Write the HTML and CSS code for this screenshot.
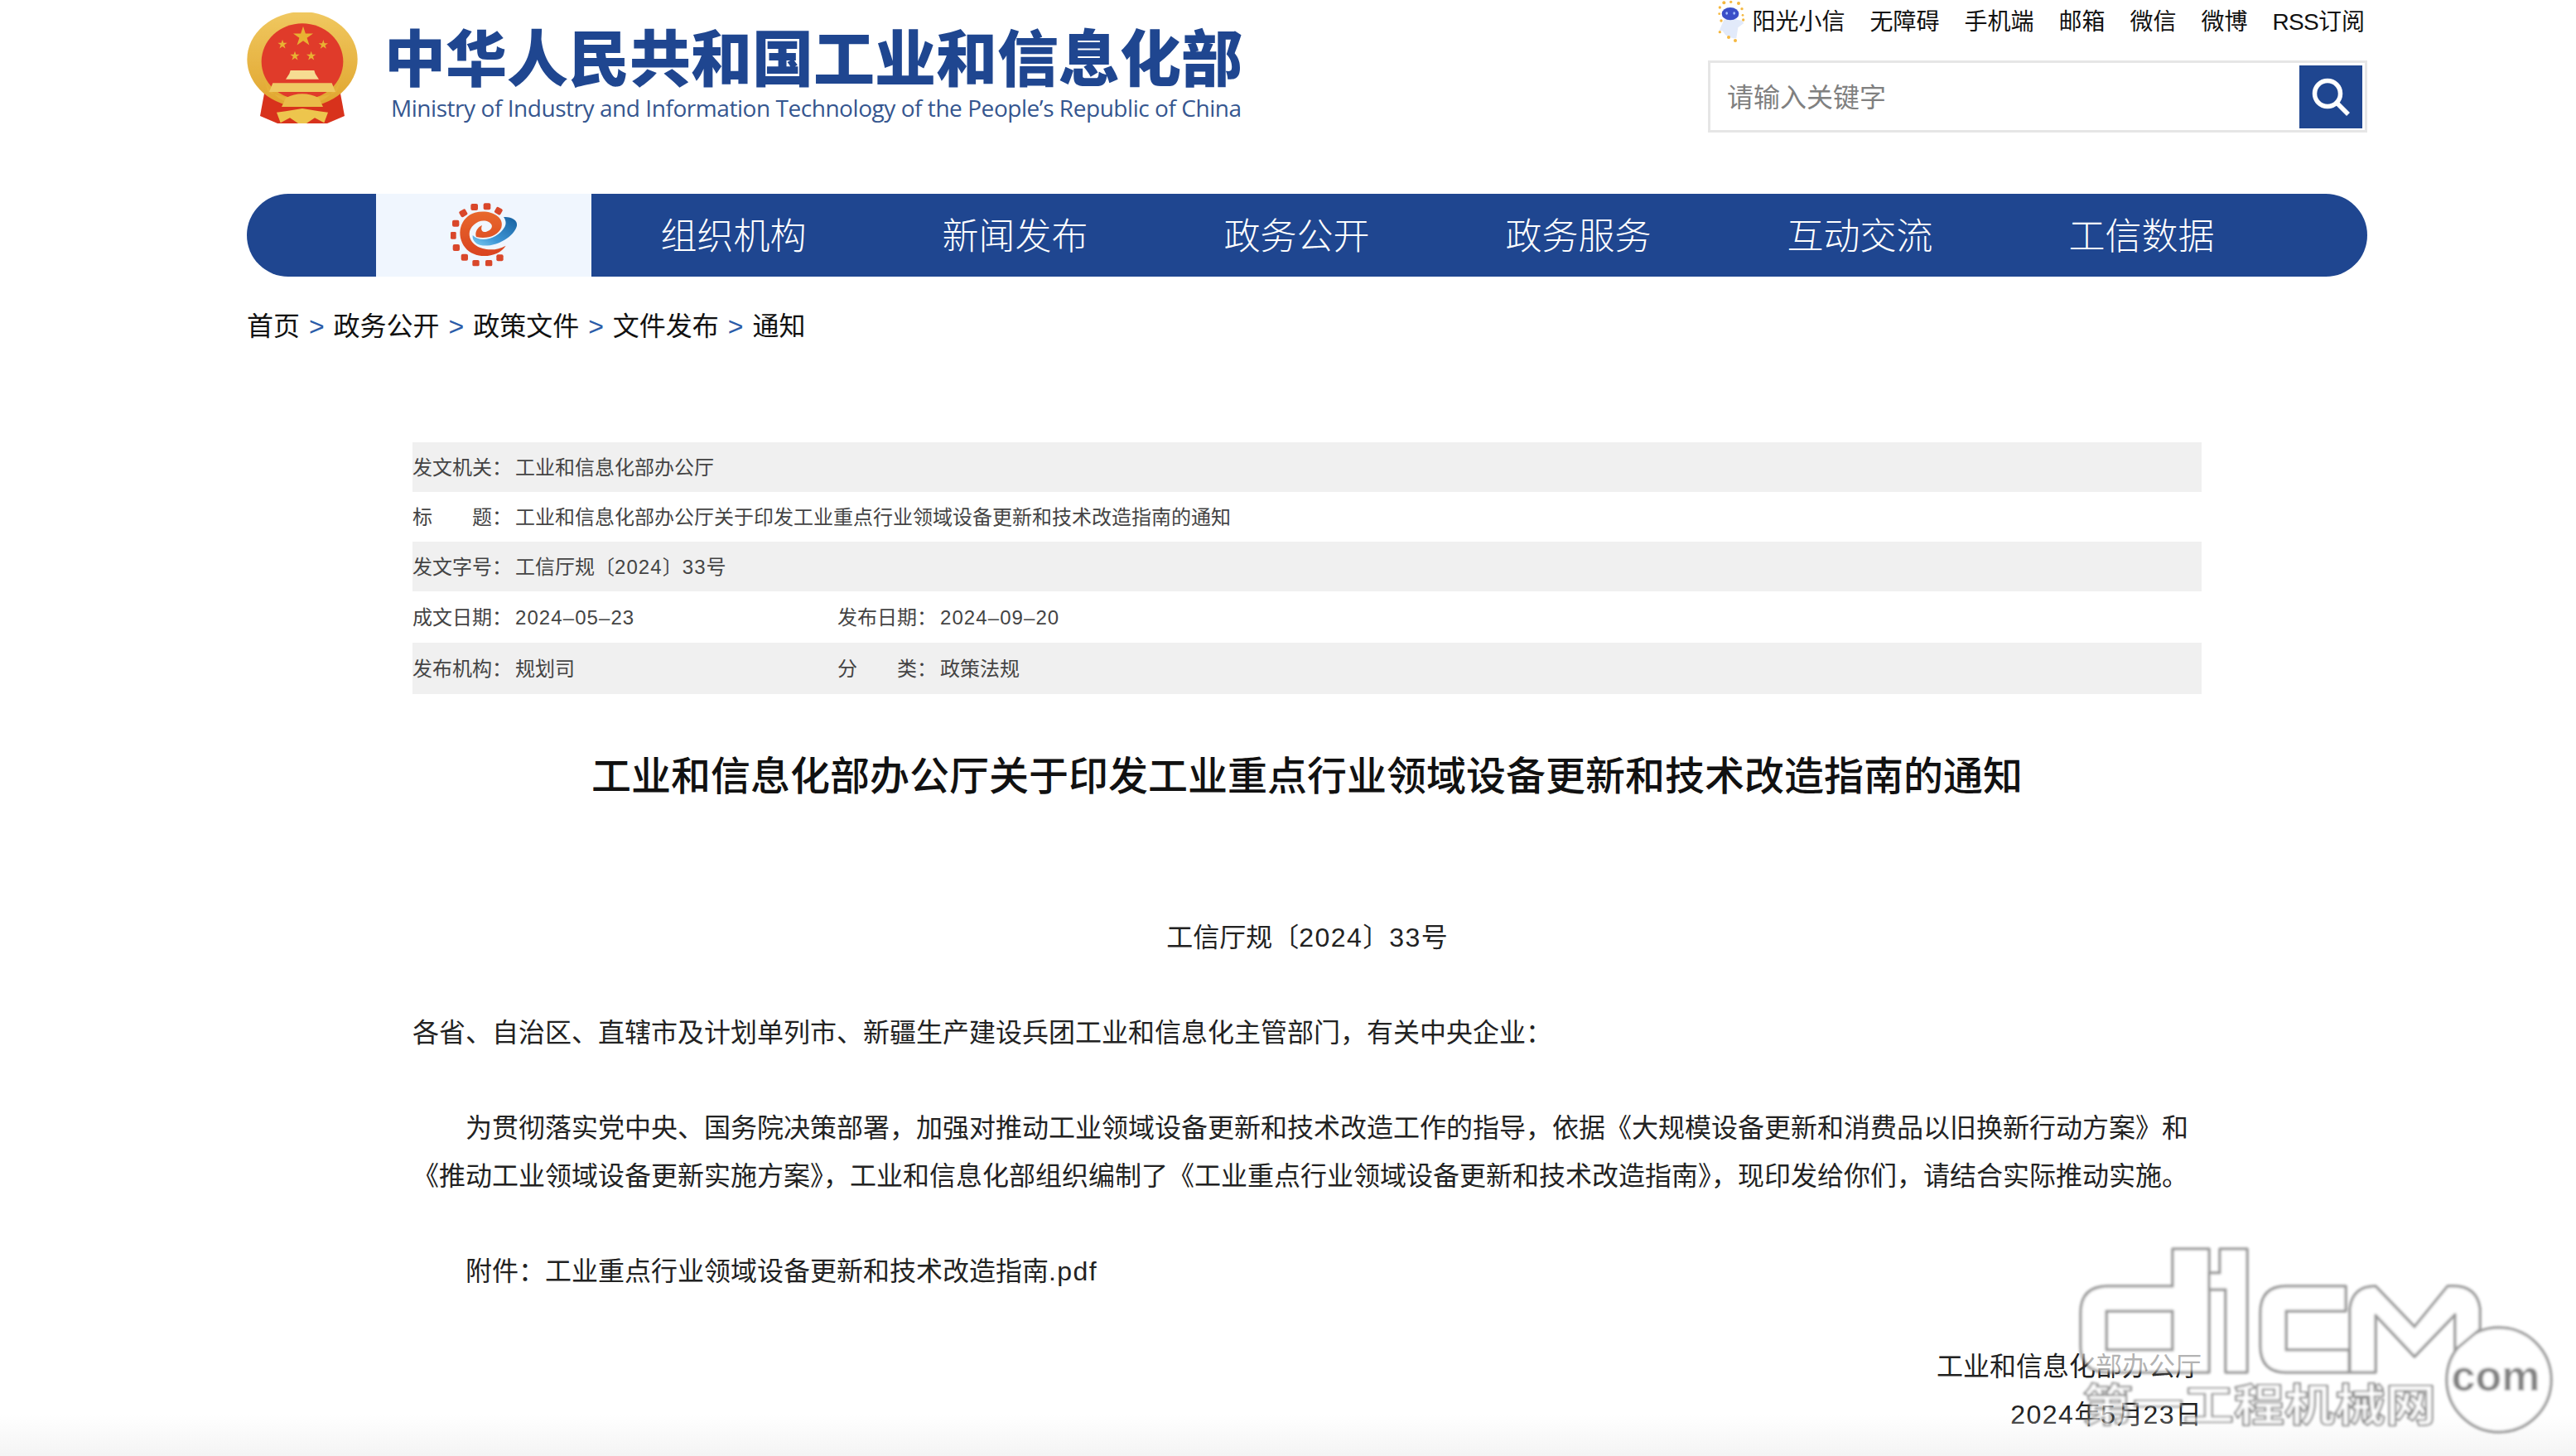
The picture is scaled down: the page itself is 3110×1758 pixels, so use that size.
FILE: index.html
```html
<!DOCTYPE html>
<html lang="zh-CN">
<head>
<meta charset="utf-8">
<title>工业和信息化部办公厅关于印发工业重点行业领域设备更新和技术改造指南的通知</title>
<link rel="stylesheet" href="styles.css">
</head>
<body>
<div class="page">
  <header class="top">
    <a class="brand">
      <svg class="emblem" viewBox="24 30 408 414" width="136" height="138">
        <defs>
          <filter id="soft-e" x="-5%" y="-5%" width="110%" height="110%"><feGaussianBlur stdDeviation="2"/></filter>
          <polygon id="star" points="0,-1 .225,-.309 .951,-.309 .363,.118 .588,.809 0,.382 -.588,.809 -.363,.118 -.951,-.309 -.225,-.309"/>
          <linearGradient id="gold" x1="0" y1="0" x2="0" y2="1"><stop offset="0" stop-color="#f0c860"/><stop offset="1" stop-color="#e0a52e"/></linearGradient>
        </defs>
        <g filter="url(#soft-e)">
          <path d="M88 318 L72 405 L135 432 L315 432 L378 405 L362 318 Z" fill="#d8321f"/>
          <ellipse cx="225" cy="200" rx="200" ry="172" fill="url(#gold)"/>
          <ellipse cx="225" cy="208" rx="148" ry="138" fill="#e03a2c"/>
          <path d="M78 250 Q110 345 190 362 L260 362 Q340 345 372 250 L350 318 Q300 340 225 340 Q150 340 100 318 Z" fill="#e6b13a"/>
          <path d="M165 340 Q225 310 285 340 L300 372 L150 372 Z" fill="#eabc48"/>
          <path d="M132 392 L165 388 L225 378 L285 388 L318 392 L304 430 L270 412 L240 432 L210 432 L180 412 L146 430 Z" fill="#edc54e"/>
          <path d="M165 272 L178 252 L182 240 H268 L272 252 L285 272 Z" fill="#f6dc92"/>
          <path d="M105 318 L118 286 H332 L345 318 Z" fill="#efc964"/>
          <g fill="#e8b233">
            <use href="#star" transform="translate(228 118) scale(38)"/>
            <use href="#star" transform="translate(153 146) scale(18)"/>
            <use href="#star" transform="translate(301 147) scale(18)"/>
            <use href="#star" transform="translate(198 188) scale(18)"/>
            <use href="#star" transform="translate(257 188) scale(18)"/>
          </g>
        </g>
      </svg>
      <div class="brand-text">
        <div class="brand-cn">中华人民共和国工业和信息化部</div>
        <div class="brand-en">Ministry of Industry and Information Technology of the People’s Republic of China</div>
      </div>
    </a>
    <div class="tools">
      <nav class="links">
        <a class="link-robot">
          <svg class="robot" viewBox="60 0 102 156" width="34" height="52">
            <defs><filter id="soft-r" x="-10%" y="-10%" width="120%" height="120%"><feGaussianBlur stdDeviation="1.6"/></filter></defs>
            <g filter="url(#soft-r)">
              <path d="M85 72 C95 66 125 66 135 72 L150 74 L157 84 L136 100 L130 138 C118 142 100 132 90 126 L80 112 L68 110 Z" fill="#e2eafa"/>
              <ellipse cx="108" cy="50" rx="31" ry="23" fill="#3a4fc8"/>
              <ellipse cx="95" cy="48" rx="4" ry="5" fill="#a8c4ff"/>
              <ellipse cx="122" cy="48" rx="4" ry="5" fill="#a8c4ff"/>
              <g fill="#f5b840">
                <circle cx="85" cy="10" r="6"/><circle cx="110" cy="7" r="5"/><circle cx="138" cy="12" r="6"/>
                <circle cx="150" cy="32" r="5"/><circle cx="153" cy="55" r="4"/><circle cx="155" cy="72" r="5"/>
                <circle cx="70" cy="27" r="5"/><circle cx="68" cy="50" r="4"/><circle cx="75" cy="75" r="5"/>
                <circle cx="70" cy="116" r="5"/><circle cx="102" cy="135" r="6"/><circle cx="126" cy="147" r="6"/>
              </g>
            </g>
          </svg>
          阳光小信
        </a>
        <a>无障碍</a><a>手机端</a><a>邮箱</a><a>微信</a><a>微博</a><a><span class="rss">RSS</span>订阅</a>
      </nav>
      <form class="search">
        <span class="placeholder">请输入关键字</span>
        <span class="search-btn">
          <svg viewBox="0 0 50 50" width="50" height="50"><circle cx="21" cy="21" r="15.5" fill="none" stroke="#fff" stroke-width="5.5"/><path d="M32 32 L46 46" stroke="#fff" stroke-width="5.5" fill="none"/></svg>
        </span>
      </form>
    </div>
  </header>

  <nav class="mainnav">
    <div class="nav-cap"></div>
    <div class="nav-logo">
      <svg viewBox="36 40 252 238" width="84" height="79.3">
        <defs>
          <filter id="soft-g" x="-5%" y="-5%" width="110%" height="110%"><feGaussianBlur stdDeviation="2"/></filter>
          <linearGradient id="blue" x1="0" y1="1" x2="1" y2="0"><stop offset="0" stop-color="#7ccbef"/><stop offset=".35" stop-color="#3f97d6"/><stop offset="1" stop-color="#17609f"/></linearGradient>
          <linearGradient id="orange" x1="0" y1="0" x2="0" y2="1"><stop offset="0" stop-color="#e8682d"/><stop offset="1" stop-color="#d9431f"/></linearGradient>
        </defs>
        <g filter="url(#soft-g)">
          <g fill="#d9472c">
            <rect x="115" y="46" width="26" height="24" rx="6"/><rect x="161" y="44" width="26" height="24" rx="6"/>
            <rect x="203" y="60" width="25" height="24" rx="6" transform="rotate(30 215 72)"/><rect x="75" y="68" width="26" height="24" rx="6" transform="rotate(-30 88 80)"/>
            <rect x="48" y="105" width="25" height="24" rx="6"/><rect x="42" y="148" width="20" height="26" rx="4"/>
            <rect x="50" y="193" width="25" height="24" rx="6"/><rect x="80" y="228" width="25" height="24" rx="6"/>
            <rect x="121" y="250" width="25" height="22" rx="5"/><rect x="168" y="250" width="25" height="22" rx="5"/><rect x="208" y="230" width="25" height="24" rx="6"/>
          </g>
          <path d="M122 160 C150 190 215 172 238 130 C246 115 240 102 234 94 C262 92 286 105 282 126 C270 170 200 206 150 196 C130 191 120 176 122 160Z" fill="url(#blue)"/>
          <path d="M242 198 C215 242 130 250 95 205 C60 160 75 95 130 78 C185 65 238 92 226 132 C215 160 175 176 135 166 C128 150 140 130 156 124 C150 140 155 150 170 148 C190 142 202 125 180 112 C150 96 110 125 110 155 C110 208 190 228 242 198Z" fill="url(#orange)"/>
        </g>
      </svg>
    </div>
    <a class="nav-item">组织机构</a>
    <a class="nav-item">新闻发布</a>
    <a class="nav-item">政务公开</a>
    <a class="nav-item">政务服务</a>
    <a class="nav-item">互动交流</a>
    <a class="nav-item">工信数据</a>
  </nav>

  <div class="crumbs">
    <a>首页</a><i>&gt;</i><a>政务公开</a><i>&gt;</i><a>政策文件</a><i>&gt;</i><a>文件发布</a><i>&gt;</i><a>通知</a>
  </div>

  <main class="doc">
    <div class="meta">
      <div class="meta-row"><span class="k">发文机关：</span><span>工业和信息化部办公厅</span></div>
      <div class="meta-row"><span class="k">标&emsp;&emsp;题：</span><span>工业和信息化部办公厅关于印发工业重点行业领域设备更新和技术改造指南的通知</span></div>
      <div class="meta-row"><span class="k">发文字号：</span><span>工信厅规〔<span class="n">2024</span>〕<span class="n">33</span>号</span></div>
      <div class="meta-row tall"><span class="half"><span class="k">成文日期：</span><span class="n">2024–05–23</span></span><span class="half"><span class="k">发布日期：</span><span class="n">2024–09–20</span></span></div>
      <div class="meta-row tall"><span class="half"><span class="k">发布机构：</span><span>规划司</span></span><span class="half"><span class="k">分&emsp;&emsp;类：</span><span>政策法规</span></span></div>
    </div>
    <h1>工业和信息化部办公厅关于印发工业重点行业领域设备更新和技术改造指南的通知</h1>
    <article class="body">
      <p class="c">工信厅规〔<span class="n">2024</span>〕<span class="n">33</span>号</p>
      <p>各省、自治区、直辖市及计划单列市、新疆生产建设兵团工业和信息化主管部门，有关中央企业：</p>
      <p class="i">为贯彻落实党中央、国务院决策部署，加强对推动工业领域设备更新和技术改造工作的指导，依据《大规模设备更新和消费品以旧换新行动方案》和《推动工业领域设备更新实施方案》，工业和信息化部组织编制了《工业重点行业领域设备更新和技术改造指南》，现印发给你们，请结合实际推动实施。</p>
      <p class="i">附件：工业重点行业领域设备更新和技术改造指南<span class="n">.pdf</span></p>
      <p class="r">工业和信息化部办公厅<br><span class="n">2024</span>年<span class="n">5</span>月<span class="n">23</span>日</p>
    </article>
  </main>
</div>

<div class="fade"></div>
<svg class="watermark" viewBox="0 0 810 278" width="810" height="278">
  <defs><filter id="soft-w" x="-2%" y="-2%" width="104%" height="104%"><feGaussianBlur stdDeviation="1.5"/></filter></defs>
  <g class="wm-shapes" filter="url(#soft-w)">
    <circle cx="717" cy="186" r="63"/>
    <path fill-rule="evenodd" d="M323 28 H367 V177 H245 Q212 177 212 145 V105 Q212 73 245 73 H323 Z M243 103 V150 H323 V103 Z"/>
    <path d="M367 57 H380 V28 H413 V177 H387 V77 H367 Z"/>
    <path d="M532 73 H460 Q429 73 429 105 V145 Q429 177 460 177 H536 V150 H460 V103 H532 Z"/>
    <path d="M537 177 V100 Q540 73 568 73 L615 122 L655 73 Q690 70 694 100 V125 L664 150 V107 L615 158 L568 108 V177 Z"/>
    <text class="wm-com" x="713" y="199" text-anchor="middle">com</text>
    <text class="wm-cn" transform="translate(214 236) scale(1 .88)">第一工程机械网</text>
  </g>
</svg>
</body>
</html>
```
FILE: styles.css
```css
* { box-sizing: border-box; }
html, body { margin: 0; padding: 0; background: #fff; }
body {
  font-family: "Liberation Sans", "Noto Sans CJK SC", sans-serif;
  color: #111;
  height: 1758px;
  overflow: hidden;
  position: relative;
}
.page { width: 2560px; margin-left: 298px; }

.top { display: flex; justify-content: space-between; height: 234px; }
.brand { display: flex; align-items: flex-start; padding-top: 15px; }
.emblem { display: block; }
.brand-text { margin-left: 30px; padding-top: 13px; }
.brand-cn {
  font-family: "Noto Sans CJK SC", sans-serif;
  font-weight: 900;
  font-size: 74px;
  line-height: 76px;
  color: #1f4690;
  white-space: nowrap;
}
.brand-en {
  font-family: "Open Sans", sans-serif;
  font-size: 28px;
  line-height: 32px;
  margin: 10px 0 0 8px;
  color: #35568f;
  letter-spacing: -0.45px;
  white-space: nowrap;
}

.tools { width: 796px; display: flex; flex-direction: column; align-items: stretch; }
.links {
  display: flex;
  justify-content: flex-end;
  gap: 30px;
  font-size: 28px;
  line-height: 54px;
  height: 73px;
  padding-right: 3px;
  color: #111;
  white-space: nowrap;
}
.rss { letter-spacing: -0.7px; }
.link-robot { display: flex; align-items: flex-start; gap: 8px; }
.robot { display: block; }
.search {
  height: 87px;
  border: 3px solid #e6e6e6;
  display: flex;
  align-items: center;
  justify-content: space-between;
  padding: 0 3px 0 20px;
}
.placeholder { font-size: 32px; color: #808080; margin-top: -3px; }
.search-btn {
  width: 76px;
  height: 76px;
  background: #1f4690;
  display: flex;
  align-items: center;
  justify-content: center;
}

.mainnav {
  display: flex;
  height: 100px;
  background: #1f4690;
  border-radius: 50px;
  overflow: hidden;
}
.nav-cap { width: 156px; }
.nav-logo {
  width: 260px;
  background: #f0f6fe;
  display: flex;
  align-items: center;
  justify-content: center;
}
.nav-item {
  width: 340px;
  padding-left: 3px;
  text-align: center;
  color: #fff;
  font-size: 44px;
  line-height: 97px;
  font-family: "Noto Sans CJK SC", sans-serif;
  font-weight: 300;
}

.crumbs {
  display: flex;
  align-items: center;
  font-size: 32px;
  line-height: 46px;
  margin-top: 37px;
  color: #111;
  white-space: nowrap;
}
.crumbs i { font-style: normal; color: #2b5ca8; width: 40.6px; text-align: center; }

.doc { width: 2160px; margin-left: 200px; margin-top: 117px; }
.meta { font-size: 24px; color: #444; }
.meta-row { display: flex; align-items: center; height: 60px; padding-bottom: 3px; white-space: nowrap; }
.meta-row:nth-child(odd) { background: #f0f0f0; }
.meta-row.tall { height: 62px; }
.k { display: inline-block; width: 124px; }
.half { width: 513px; display: flex; align-items: baseline; }
.n { letter-spacing: .045em; }

h1 {
  margin: 60px 0 0;
  text-align: center;
  font-family: "Noto Sans CJK SC", sans-serif;
  font-weight: 500;
  font-size: 48px;
  line-height: 70px;
  color: #111;
}

.body { margin-top: 136px; font-size: 32px; line-height: 1.8; color: #222; }
.body p { margin: 0 0 1.8em; }
.body .c { text-align: center; }
.body .i { text-indent: 2em; }
.body .r { text-align: right; }

.fade {
  position: absolute;
  left: 0;
  right: 0;
  bottom: 0;
  height: 50px;
  background: linear-gradient(to bottom, rgba(244,244,244,0), #f4f4f4);
}
.watermark { position: absolute; left: 2300px; top: 1480px; }
.wm-shapes { opacity: .66; fill: #fff; stroke: #666; stroke-width: 3.5px; stroke-linejoin: round; }
.wm-com { font: 700 52px "Liberation Sans", sans-serif; fill: #444; stroke: none; }
.wm-cn { font: 700 61px "Noto Sans CJK SC", sans-serif; fill: #fff; stroke: #555; stroke-width: 2.5px; }
```
